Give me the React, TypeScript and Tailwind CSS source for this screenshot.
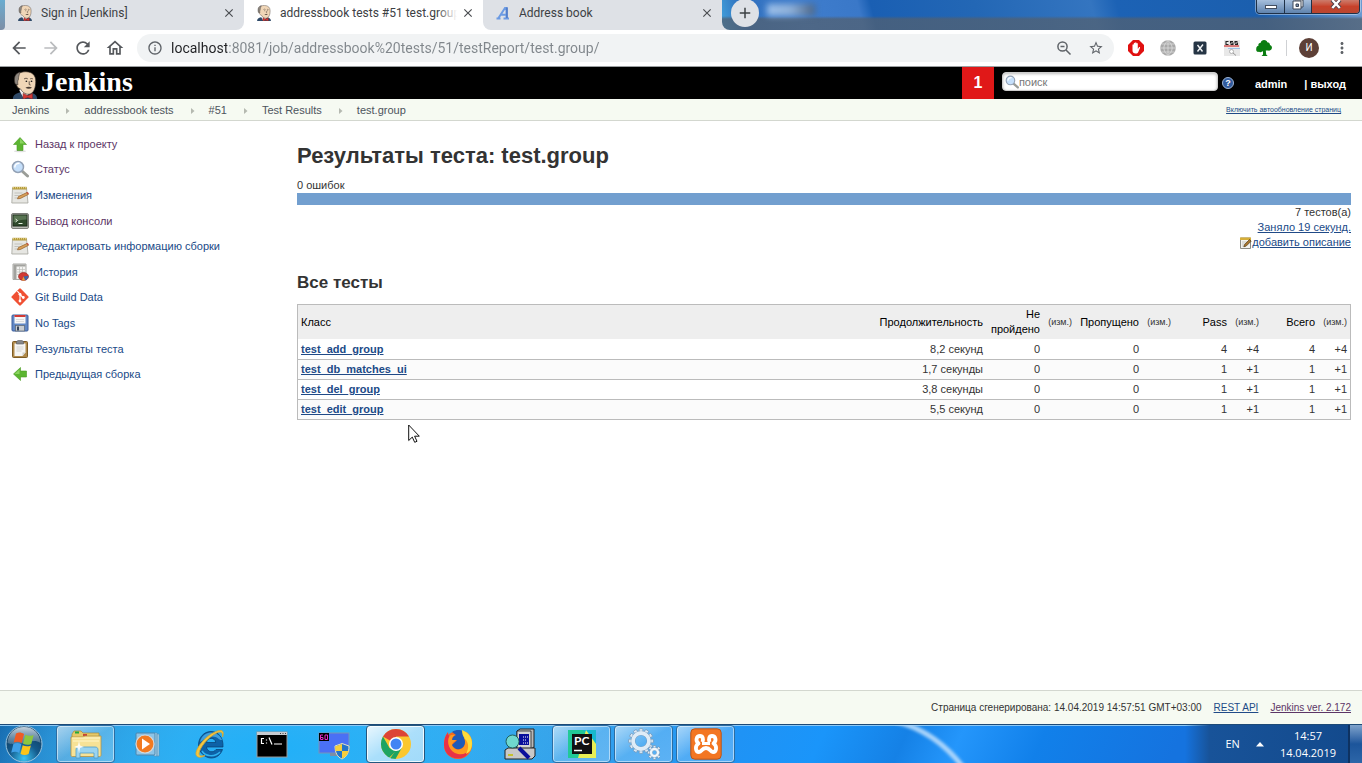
import React from "react";
import { MdArrowBack, MdArrowForward, MdRefresh, MdOutlineHome, MdStarBorder, MdInfoOutline, MdMoreVert, MdClose, MdAdd } from "react-icons/md";

const chromeFont = "font-['Roboto','Noto_Sans',sans-serif]";
const taskbarFont = "font-['Open_Sans','Noto_Sans',sans-serif]";

function Butler({ className }: { className: string }) {
  return (
    <svg viewBox="0 0 26 30" className={className} aria-hidden="true">
      <path d="M0 30c0-4 3-6 7-7h12c4 1 7 3 7 7z" fill="#2f4a68" />
      <path d="M7 21l5 9 7-8-2-4H8z" fill="#f4f4f4" />
      <path d="M3 8C3 3 8 .8 14 .8c7 .2 10.500 4 10.500 10.200 0 6-1.500 11.500-5.500 13.500-4 1.500-8.500-1-10.500-5-3-1-4.500-3-4.500-5-1-2-1-4-1-6.500z" fill="#f0d6b7" stroke="#3a2f28" strokeWidth=".7" />
      <path d="M2.500 14C.5 8 2 2.500 8 1.200c-1.500 3-2 5.500-2 8-1 1.500-1 3-.5 5.500z" fill="#8d8780" stroke="#3a2f28" strokeWidth=".6" />
      <path d="M12 8.500c1.500-1 3-.8 4 0M18.500 8.500c1-.6 2.200-.5 3 0M17.500 11v3.500l1.500.5" fill="none" stroke="#3a2f28" strokeWidth=".8" />
      <circle cx="14.500" cy="11" r=".9" fill="#222" /><circle cx="20" cy="11" r=".9" fill="#222" />
      <path d="M13.500 18c2-1.600 5-1.600 7 0-2 1.200-5 1.200-7 0z" fill="#4a3d35" />
      <path d="M11 24l5 2.500 5-2.500v6l-5-1.500L11 30z" fill="#d33833" stroke="#81201e" strokeWidth=".6" />
    </svg>
  );
}

function Lens({ className }: { className: string }) {
  return (
    <svg viewBox="0 0 18 18" className={className} aria-hidden="true">
      <path d="M11 11l5.500 5" stroke="#9a9d98" strokeWidth="3" strokeLinecap="round" />
      <circle cx="7" cy="7" r="5.500" fill="#c5dffa" stroke="#93a1b5" strokeWidth="1.500" />
      <path d="M3.800 7.500c0-3 2-4.300 4.700-4.200" stroke="#fff" strokeWidth="1.500" fill="none" />
    </svg>
  );
}

function Notepad({ className }: { className: string }) {
  return (
    <svg viewBox="0 0 18 18" className={className} aria-hidden="true">
      <path d="M1.500 2h14L17 17H.8z" fill="#e6e6e2" stroke="#a3a39c" strokeWidth=".8" />
      <path d="M1.500 .8h14.200v2.700H1.500z" fill="#b59b3d" />
      <path d="M2 1.800h13.500" stroke="#f2e6a6" strokeDasharray="1 1" />
      <path d="M3.500 7h8M3.500 9.500h5M3.500 12h4" stroke="#b9b9b4" strokeWidth=".8" />
      <path d="M6.500 12.800l1-2.300 8.500-4 1.500 1.800-8.200 4.200z" fill="#d9a05a" stroke="#8f5a21" strokeWidth=".7" />
      <path d="M15.500 6.500l1.200-.5 1.200 1.500-1 .8z" fill="#c84b42" />
    </svg>
  );
}

function EditNote({ className }: { className: string }) {
  return (
    <svg viewBox="0 0 12 12" className={className} aria-hidden="true">
      <path d="M.5 1h10v10.500H.5z" fill="#f3f3ef" stroke="#8b8b84" />
      <path d="M0 .5h11v2.500H0z" fill="#d6ae38" />
      <path d="M2 5h5M2 7h3M2 9h3" stroke="#bdbdb6" strokeWidth=".8" />
      <path d="M3.800 9.800l.8-2.300L9.500 2.500l1.700 1.600-5 5z" fill="#a8762f" stroke="#523a12" strokeWidth=".7" />
    </svg>
  );
}

function ConsoleIcon({ className }: { className: string }) {
  return (
    <svg viewBox="0 0 18 18" className={className} aria-hidden="true">
      <rect x=".5" y="1.500" width="17" height="15" rx="1.500" fill="#b9bbb5" stroke="#7d7f7a" />
      <rect x="2" y="3" width="14" height="11" fill="#2f4a2c" stroke="#1c2a1a" />
      <path d="M2.500 3.500h13v4c-5 0-9 1-13 3z" fill="#587452" />
      <path d="M4.500 7l2 1.500-2 1.500M7.500 11.500h4" stroke="#e9f5e4" fill="none" />
    </svg>
  );
}

function HistoryIcon({ className }: { className: string }) {
  return (
    <svg viewBox="0 0 18 18" className={className} aria-hidden="true">
      <path d="M2 1h13v15.500H2z" fill="#f4f4f2" stroke="#a9a9a5" />
      <path d="M2.500 1.500h3v14.500h-3zM5 1.500h9.500v2H5z" fill="#a2a29e" />
      <path d="M6 6.500h8M6 9h8M6 11.500h8M8.500 4v11M11.500 4v11" stroke="#bdbdb9" strokeWidth=".7" />
      <ellipse cx="12.500" cy="13.500" rx="5" ry="4" fill="#d13a34" stroke="#8f1d1a" strokeWidth=".6" />
      <path d="M12.500 13.500l4.800-.8c.4 2-1 4-3.300 4.600z" fill="#3f65a8" /><path d="M12.500 13.500l1.500 3.800c-1 .3-2 .2-3 0z" fill="#e5a63c" />
    </svg>
  );
}

function GitIcon({ className }: { className: string }) {
  return (
    <svg viewBox="0 0 18 18" className={className} aria-hidden="true">
      <rect x="2.600" y="2.600" width="12.800" height="12.800" rx="1.200" transform="rotate(45 9 9)" fill="#f05033" />
      <path d="M6.300 3.200L9 6v7M9 6.500L12 9.500" stroke="#fff" strokeWidth="1.100" fill="none" />
      <circle cx="9" cy="6.300" r="1.400" fill="#fff" /><circle cx="9" cy="13" r="1.400" fill="#fff" /><circle cx="12.300" cy="9.500" r="1.400" fill="#fff" />
    </svg>
  );
}

function FloppyIcon({ className }: { className: string }) {
  return (
    <svg viewBox="0 0 18 18" className={className} aria-hidden="true">
      <rect x="1" y="1" width="16" height="16" rx="1" fill="#6288c6" stroke="#3c5f9c" />
      <rect x="3.500" y="1.500" width="11" height="8" fill="#f7f7f7" /><path d="M3.500 1h11v2h-11z" fill="#d23b36" />
      <path d="M5 5.500h8M5 7.500h8" stroke="#d0d0d0" strokeWidth=".7" />
      <rect x="4.500" y="11.500" width="9" height="5.500" fill="#c8ccd2" stroke="#5b6470" strokeWidth=".7" /><rect x="6" y="12.500" width="2" height="4" fill="#37445a" />
    </svg>
  );
}

function ClipboardIcon({ className }: { className: string }) {
  return (
    <svg viewBox="0 0 18 18" className={className} aria-hidden="true">
      <rect x="1.500" y="1.500" width="15" height="16" rx="1" fill="#b08a4b" stroke="#7d5c25" />
      <path d="M3.500 3.500h11v9l-3 3.500h-8z" fill="#f6f6f4" /><path d="M14.500 12.500h-3v3.500z" fill="#cfcfca" />
      <path d="M5.500 7h7M5.500 9h7M5.500 11h5" stroke="#cdcdc8" strokeWidth=".8" />
      <path d="M5.500 1.500l1.500-1h4l1.500 1v2.500h-7z" fill="#85878a" stroke="#5a5c5e" strokeWidth=".6" />
    </svg>
  );
}

function GreenArrow({ left }: { left?: boolean }) {
  return (
    <svg viewBox="0 0 18 18" className="h-4.5 w-4.5 shrink-0" aria-hidden="true">
      <g transform={left ? "rotate(-90 9 9)" : undefined}>
        <path d="M9 2.500l6.500 7h-3.500v6H6v-6H2.500z" fill="#5cb531" stroke="#4a9a24" strokeWidth=".6" />
        <path d="M9 3.500l4.500 5H9z" fill="#8ad45e" />
      </g>
      {!left && <ellipse cx="9" cy="16.200" rx="6" ry="1" fill="#000" opacity=".12" />}
    </svg>
  );
}

const ic = "h-4.5 w-4.5 shrink-0";
const tasks = [
  { label: "Назад к проекту", icon: <GreenArrow />, visited: true },
  { label: "Статус", icon: <Lens className={ic} />, visited: true },
  { label: "Изменения", icon: <Notepad className={ic} /> },
  { label: "Вывод консоли", icon: <ConsoleIcon className={ic} />, visited: true },
  { label: "Редактировать информацию сборки", icon: <Notepad className={ic} /> },
  { label: "История", icon: <HistoryIcon className={ic} /> },
  { label: "Git Build Data", icon: <GitIcon className={ic} /> },
  { label: "No Tags", icon: <FloppyIcon className={ic} /> },
  { label: "Результаты теста", icon: <ClipboardIcon className={ic} /> },
  { label: "Предыдущая сборка", icon: <GreenArrow left /> },
];

const rows = [
  { name: "test_add_group", time: "8,2 секунд", n: "4" },
  { name: "test_db_matches_ui", time: "1,7 секунды", n: "1" },
  { name: "test_del_group", time: "3,8 секунды", n: "1" },
  { name: "test_edit_group", time: "5,5 секунд", n: "1" },
];

function Tab({ title, icon, active, shape }: { title: string; icon: React.ReactNode; active?: boolean; shape: string }) {
  return (
    <div className={`flex w-[239px] shrink-0 items-center pr-2 pb-1 pl-3 ${active ? "bg-white" : "bg-[#dee1e6]"} ${shape}`}>
      <button className="flex min-w-0 flex-1 items-center gap-2 text-left">
        {icon}
        <span className="relative min-w-0 flex-1 overflow-hidden text-xs leading-4 whitespace-nowrap text-[#3c4043]">
          {title}
          {active && <span className="absolute inset-y-0 right-0 w-5 bg-linear-to-r from-white/0 to-white" />}
        </span>
      </button>
      <button aria-label="Закрыть вкладку" className="ml-1 text-[#4a4d51]">
        <MdClose className="h-3.5 w-3.5" />
      </button>
    </div>
  );
}

function TabStrip() {
  return (
    <div className="flex h-[30px] overflow-hidden bg-white">
      <div className="w-[5px] shrink-0 bg-[#dee1e6]"><div className="h-full rounded-br bg-linear-to-b from-[#69acd0] to-[#7c8ea6]" /></div>
      <Tab title="Sign in [Jenkins]" icon={<Butler className="h-4 w-4" />} shape="rounded-br-lg" />
      <Tab title="addressbook tests #51 test.group" active icon={<Butler className="h-4 w-4" />} shape="" />
      <Tab
        title="Address book"
        shape="rounded-bl-lg"
        icon={
          <svg viewBox="0 0 16 16" className="h-4 w-4" aria-hidden="true">
            <path d="M1.500 13.500h4M8.500 13.500h5.500M3.500 13L10 3h1.500v10M6 9.800h5.500" fill="none" stroke="#6c9be3" strokeWidth="2" />
            <path d="M12 2.500v10.500" stroke="#4a76c4" strokeWidth="1.500" />
          </svg>
        }
      />
      <div className="min-w-0 flex-1 bg-[#dee1e6]">
        <div className="flex h-full items-start justify-between rounded-bl-lg bg-[linear-gradient(to_bottom,transparent_16px,rgba(82,96,112,0.75)_19px),linear-gradient(75deg,#43a3dc_0%,#2f6fbd_4%,#3f7dcd_13%,#3a78c8_22%,#1a5fb3_24%,#2367b5_40%,#3475c0_58%,#1c62b5_62%,#1b5fae_84%,#6c9bd2_100%)] pl-[9px]">
          <div className="flex">
            <button aria-label="Новая вкладка" className="mt-[-1px] flex h-7 w-7 items-center justify-center rounded-full bg-[#dee1e6] text-[#3c4043]">
              <MdAdd className="h-4.5 w-4.5" />
            </button>
            <span className="mt-1 ml-2 h-3 w-12 bg-linear-to-r from-[#9cc0ea] via-[#8fb0d8] to-[#4b6484] blur-[3px]" />
          </div>
          <div className="mr-0.5 flex h-[14px] overflow-hidden rounded-b border-x border-b border-[#1f3147] ring-1 ring-white/40">
            <button aria-label="Свернуть" className="flex w-7 items-center justify-center border-r border-[#1f3147] bg-linear-to-b from-[#a6bfdc] to-[#5f83ae]">
              <span className="h-1 w-3 border border-[#444f60] bg-white" />
            </button>
            <button aria-label="Развернуть" className="flex w-[27px] items-start justify-center border-r border-[#1f3147] bg-linear-to-b from-[#a6bfdc] to-[#5f83ae]">
              <svg viewBox="0 0 12 12" className="h-3 w-3" aria-hidden="true"><path d="M3 0h8v7H9" fill="#fff" stroke="#3c4657" /><path d="M1 1h8v8H1z" fill="#fff" stroke="#3c4657" /><path d="M4 4h2.500v2.500H4z" fill="#7890ad" stroke="#3c4657" /></svg>
            </button>
            <button aria-label="Закрыть" className="flex w-[47px] items-start justify-center bg-linear-to-b from-[#cc7b6b] via-[#c7412a] to-[#b94630]">
              <svg viewBox="0 0 12 10" className="h-2.5 w-3" aria-hidden="true"><path d="M2 0l8 8M10 0L2 8" stroke="#4d3f48" strokeWidth="4" /><path d="M2.300 0l7.500 8M9.800 0L2.300 8" stroke="#fff" strokeWidth="2.400" /></svg>
            </button>
          </div>
        </div>
      </div>
    </div>
  );
}

function Toolbar() {
  const nav = "flex h-5 w-5 items-center justify-center text-[#55585c]";
  return (
    <div className="flex h-[37px] items-center border-b border-[#9b9fa1] bg-white pr-[11px] pl-[9px]">
      <div className="mr-3 flex gap-3">
        <button aria-label="Назад" className={nav}><MdArrowBack className="h-5 w-5" /></button>
        <button aria-label="Вперёд" className="flex h-5 w-5 items-center justify-center text-[#babcbe]"><MdArrowForward className="h-5 w-5" /></button>
        <button aria-label="Обновить" className={nav}><MdRefresh className="h-5 w-5" /></button>
        <button aria-label="Домашняя страница" className={nav}><MdOutlineHome className="h-5 w-5" /></button>
      </div>
      <div className="flex h-7 min-w-0 flex-1 items-center rounded-full bg-[#f1f3f4] px-2.5 text-[#5f6368]">
        <MdInfoOutline className="h-4 w-4 shrink-0" />
        <input
          aria-label="Адресная строка"
          defaultValue="localhost:8081/job/addressbook%20tests/51/testReport/test.group/"
          className="ml-2 min-w-0 flex-1 bg-[linear-gradient(to_right,#202124_56px,#80868b_56px)] bg-clip-text text-sm text-transparent outline-none"
        />
        <button aria-label="Масштаб" className="mr-4">
          <svg viewBox="0 0 16 16" className="h-4 w-4" fill="none" stroke="currentColor" strokeWidth="1.500" aria-hidden="true"><circle cx="6.500" cy="6.500" r="4.600" /><path d="M10 10l4.500 4.500M4.500 6.500h4" /></svg>
        </button>
        <button aria-label="Добавить в закладки"><MdStarBorder className="h-4 w-4" /></button>
      </div>
      <div className="ml-3.5 flex gap-4">
        <button aria-label="Блокировщик" className="h-4 w-4">
          <svg viewBox="0 0 16 16" aria-hidden="true"><path d="M5 0h6l5 5v6l-5 5H5l-5-5V5z" fill="#e01010" /><path d="M4.500 8.500V5c0-1 1.300-1 1.300 0V3.500c0-1 1.300-1 1.300 0V3c0-1 1.400-1 1.400 0v.7c0-1 1.300-1 1.300.2V9l1-1.500c.6-.8 1.500-.3 1.200.5l-1.700 4c-.5 1-1.300 1.500-2.600 1.500-2 0-3.200-1-3.200-3z" fill="#fff" /></svg>
        </button>
        <button aria-label="Перевод" className="h-4 w-4">
          <svg viewBox="0 0 16 16" aria-hidden="true"><circle cx="8" cy="8" r="7.800" fill="#a9a9a9" /><path d="M8 0v16M0 8h16M1.500 4h13M1.500 12h13M8 .5C2.500 5 2.500 11 8 15.500M8 .5C13.500 5 13.500 11 8 15.500" stroke="#dcdcdc" strokeWidth=".8" fill="none" /></svg>
        </button>
        <button aria-label="XPath" className="h-4 w-4">
          <svg viewBox="0 0 16 16" aria-hidden="true"><rect x="1.500" y="1.500" width="13" height="13" rx="1.500" fill="#263545" /><path d="M5.500 5l5 6.500M11 4.500L5.500 11.500" stroke="#f3f5f7" strokeWidth="1.400" /></svg>
        </button>
        <button aria-label="CSS" className="h-4 w-4">
          <svg viewBox="0 0 16 16" aria-hidden="true"><path d="M0 0h16v16H0z" fill="#e8e8e8" /><path d="M4.500 1.500H2v3h2.500M9 1.500H6.500V3H9v1.500H6.500M13.500 1.500H11V3h2.500v1.500H11" stroke="#222" strokeWidth="1.100" fill="none" /><path d="M0 6h15" stroke="#d34b4b" strokeWidth="1.400" /><path d="M4 8.500h12" stroke="#9ec2e8" /><circle cx="7.500" cy="11.500" r="2" fill="#fff" stroke="#999" strokeWidth=".7" /><path d="M9 13l3 2.500" stroke="#999" /></svg>
        </button>
        <button aria-label="Дерево" className="h-4 w-4">
          <svg viewBox="0 0 16 16" aria-hidden="true"><path d="M8 0c2 0 3 1 3.200 2.200C13 2.300 14 3.500 14 5c1.500.5 2.300 2 1.800 3.500-.5 1.700-2.300 2.500-4 2L9.800 10.500l.4 4 1.500 1.500H5.500L7 14.500V11c-1 1.200-3 1.500-4 .8C1 12.500-.3 10.500.3 9c-.3-1.800.7-3 2.200-3.300C2 4 3 2.800 4.700 2.700 5 1 6.500 0 8 0z" fill="#0a7d10" /></svg>
        </button>
      </div>
      <span className="mr-3 ml-3.5 h-4 w-px bg-[#cfd1d4]" />
      <button className="flex h-5 w-5 items-center justify-center rounded-full bg-[#5d4037] text-[10px] leading-3 text-white">И</button>
      <button aria-label="Меню" className="ml-3.5 text-[#5f6368]"><MdMoreVert className="h-4.5 w-4.5" /></button>
    </div>
  );
}

function JenkinsHeader() {
  const crumbs = ["Jenkins", "addressbook tests", "#51", "Test Results", "test.group"];
  return (
    <header>
      <div className="flex h-8 items-stretch bg-black pr-4 pl-[11px]">
        <a href="#" className="flex items-start gap-0.5 text-white">
          <Butler className="mt-1 h-7 w-7" />
          <span className="font-['Liberation_Serif',serif] text-[28px] leading-[30px] font-bold">Jenkins</span>
        </a>
        <div className="flex-1" />
        <a href="#" className="flex w-8 items-center justify-center bg-[#e01818] text-base font-bold text-white">1</a>
        <label className="mt-[5px] ml-2 flex h-[19px] w-[216px] items-center rounded-sm border border-[#ccc] bg-white pl-0.5 shadow-[inset_0_1px_3px_#bbb]">
          <Lens className="h-3.5 w-3.5 shrink-0" />
          <input type="search" aria-label="поиск" placeholder="поиск" className="min-w-0 flex-1 bg-transparent text-[11px] leading-4 outline-none placeholder:text-[#777]" />
        </label>
        <a href="#" aria-label="Справка" className="ml-1 flex items-center">
          <span className="flex h-3 w-3 items-center justify-center rounded-full border border-[#9db4d4] bg-[#315a9c] text-[9px] leading-3 font-bold text-white">?</span>
        </a>
        <a href="#" className="mt-[10px] ml-[21px] leading-[15px] font-bold text-white">admin</a>
        <span className="mt-[10px] ml-[17px] leading-[15px] font-bold text-white">| <a href="#">выход</a></span>
      </div>
      <nav className="flex h-[22px] items-center border-b border-[#d3d7cf] bg-[#f6faf2] px-3 pt-0.5 text-[#4d545d]">
        {crumbs.map((c, i) => (
          <React.Fragment key={c}>
            {i > 0 && (
              <svg viewBox="0 0 4 6" className="mr-3.5 ml-[17px] h-1.5 w-1" aria-hidden="true"><path d="M0 0l3.500 3L0 6z" fill="#b5b9b0" /></svg>
            )}
            <a href="#">{c}</a>
          </React.Fragment>
        ))}
        <a href="#" className="mr-[9px] ml-auto text-[7px] text-[#204a87] underline">Включить автообновление страниц</a>
      </nav>
    </header>
  );
}

function ResultsTable() {
  const th = "px-[3px] text-right font-normal text-black";
  const thDiff = "px-[3px] text-right text-[9px] font-normal text-[#333]";
  const td = "border-t border-[#bbb] px-[3px] text-right";
  return (
    <table className="w-full table-fixed border-separate border-spacing-0 border border-[#bbb] leading-[15px]">
      <colgroup>
        <col /><col className="w-[120px]" />
        <col className="w-[57px]" /><col className="w-8" />
        <col className="w-[67px]" /><col className="w-8" />
        <col className="w-14" /><col className="w-8" />
        <col className="w-14" /><col className="w-8" />
      </colgroup>
      <thead className="bg-[#eee]">
        <tr className="h-[34px]">
          <th className="px-[3px] text-left font-normal text-black">Класс</th>
          <th className={th}>Продолжительность</th>
          <th className={th}>Не пройдено</th><th className={thDiff}>(изм.)</th>
          <th className={th}>Пропущено</th><th className={thDiff}>(изм.)</th>
          <th className={th}>Pass</th><th className={thDiff}>(изм.)</th>
          <th className={th}>Всего</th><th className={thDiff}>(изм.)</th>
        </tr>
      </thead>
      <tbody className="[&>tr:first-child>td]:border-white">
        {rows.map((r) => (
          <tr key={r.name} className="h-5 even:bg-[#fbfbfb]">
            <td className="border-t border-[#bbb] px-[3px] font-bold"><a href="#" className="text-[#204a87] underline">{r.name}</a></td>
            <td className={td}>{r.time}</td>
            <td className={td}>0</td><td className={td} />
            <td className={td}>0</td><td className={td} />
            <td className={td}>{r.n}</td><td className={td}>+{r.n}</td>
            <td className={td}>{r.n}</td><td className={td}>+{r.n}</td>
          </tr>
        ))}
      </tbody>
    </table>
  );
}

function WinButton({ label, look, children }: { label: string; look: "open" | "active" | "pinned"; children: React.ReactNode }) {
  const skin = {
    pinned: "border-transparent",
    open: "border-[#2b6da3] bg-linear-to-br from-white/60 via-white/20 to-white/25 shadow-[inset_0_0_0_1px_rgba(255,255,255,0.5)]",
    active: "border-[#24577f] bg-linear-to-br from-white/90 via-white/60 to-white/55 shadow-[inset_0_0_0_1px_rgba(255,255,255,0.8)]",
  }[look];
  return (
    <button aria-label={label} className={`flex h-full w-[59px] items-center justify-center rounded-sm border ${skin}`}>
      <svg viewBox="0 0 32 32" className="h-8 w-8" aria-hidden="true">{children}</svg>
    </button>
  );
}

const gearTeeth = Array.from({ length: 12 }, (_, i) => i * 30);
const smallTeeth = Array.from({ length: 8 }, (_, i) => i * 45);

function Taskbar() {
  return (
    <div className={`flex h-[39px] items-stretch border-t border-[#1d4a77] bg-[radial-gradient(ellipse_300px_90px_at_20%_60%,#21b0f8,transparent),linear-gradient(115deg,#1668ac_0%,#2b86c8_4%,#45aeea_14%,#3fb2f2_26%,#38a4ea_40%,#1f93f5_54%,#1a95fa_60%,#1581e6_66%,#2496fb_70%,#1180ea_76%,#1573df_86%,#1573df_90%)] text-white shadow-[inset_0_1px_0_#8cc8f5] ${taskbarFont}`}>
      <button aria-label="Пуск" className="mr-[13px] ml-[5px] flex items-center">
        <svg viewBox="0 0 38 38" className="h-[38px] w-[38px]" aria-hidden="true">
          <defs>
            <radialGradient id="orb" cx=".5" cy=".9" r=".9"><stop offset="0" stopColor="#3bc4f4" /><stop offset=".45" stopColor="#145a8c" /><stop offset="1" stopColor="#0c3354" /></radialGradient>
            <linearGradient id="orbShine" x2="0" y2="1"><stop offset="0" stopColor="#e6eff6" stopOpacity=".85" /><stop offset="1" stopColor="#9fb6c8" stopOpacity=".35" /></linearGradient>
          </defs>
          <circle cx="19" cy="19" r="18" fill="url(#orb)" stroke="#9bc4df" strokeWidth="1" />
          <path d="M2.500 18C3 8 10 2 19 2s16 6 16.500 16c-6-4-10-1-16.500 0S8 20 2.500 18z" fill="url(#orbShine)" />
          <path d="M11 8.500c3-1.500 5.200-1.200 8 .5l-2.300 9c-2.600-1.600-5.200-1.800-8-.4z" fill="#ef5b25" />
          <path d="M20.300 9.700c2.900 1.500 5.400 1.500 8.300.2l-2.300 9c-2.900 1.300-5.400 1.200-8.300-.2z" fill="#8cc63f" />
          <path d="M8.400 19c2.900-1.400 5.500-1.200 8 .3l-2.200 8.700c-2.600-1.500-5.100-1.600-8-.3z" fill="#3fa0e8" />
          <path d="M17.700 20.200c2.700 1.400 5.300 1.500 8.200.2l-2.300 8.700c-2.900 1.400-5.400 1.200-8.100-.2z" fill="#fcc419" />
        </svg>
      </button>
      <div className="flex gap-[3px]">
        <WinButton label="Проводник" look="open">
          <path d="M2 6l2-3h7l2 2h16v6H2z" fill="#e6c968" stroke="#a8863a" strokeWidth=".7" />
          <path d="M5 3.500h4v2H5z" fill="#23a83b" /><path d="M13 6h4v2h-4z" fill="#c84438" /><path d="M21 8h4v2h-4z" fill="#3f8ed3" />
          <path d="M1 9h12l2-1h16v19c0 1-.5 1.500-1.500 1.500h-27C1.500 28.500 1 28 1 27z" fill="#f7e296" stroke="#b69443" strokeWidth=".8" />
          <path d="M2 10h28M3 13h26" stroke="#fff6c9" />
          <path d="M6 30V22c0-2 1-3 3-3h16c2 0 3 1 3 3v8h-4v-5H10v5z" fill="#9ad4f0" stroke="#4b9cc9" strokeWidth=".8" />
          <path d="M9 13l1 4.500 4 1.500-4 1-1 5-1-5-4-1 4-1.500z" fill="#fff" opacity=".9" />
        </WinButton>
        <WinButton label="Проигрыватель" look="pinned">
          <path d="M22 5h3v23h-3zM25 6h2v22h-2z" fill="#b3dcf3" stroke="#5992b8" strokeWidth=".7" />
          <rect x="4" y="5" width="19" height="22" rx="1" fill="#8cc5e8" stroke="#4c86ad" />
          <circle cx="13" cy="16" r="9" fill="#f27a21" stroke="#d5d9dc" strokeWidth="1.200" /><path d="M10 10.500l8 5.500-8 5.500z" fill="#fff" />
        </WinButton>
        <WinButton label="Internet Explorer" look="pinned">
          <path fillRule="evenodd" d="M4.500 17C4.500 9.500 10 3.500 17 3.500S29.500 9 29 19H12.500c.5 5.500 7.500 6 9.500 2.500h6.500C26.500 27 22.500 30 17 30S4.500 24.500 4.500 17zM12.500 14.500h9.200c-.3-5.500-8.700-5.500-9.200 0z" fill="#0d62a8" stroke="#083c6e" strokeWidth=".7" />
          <path d="M6 14C7.500 8 12 4.500 17 4.500S27 8 28 12c-3 .5-4-3.500-10-3.500S9 13 6 14z" fill="#3f9edb" />
          <path d="M8 23c3 5 12 7 18 1" stroke="#2fb2ef" strokeWidth="1.500" fill="none" />
          <path d="M28.500 9C31 2 27 1.500 22 3.500 11 8 1 21 2 26.500c1 4 6 3 9 1-4 1-6 .5-6-2C5.500 20 14 9 23 4.800c4-1.800 6-.3 5.500 4.200z" fill="#f4c842" stroke="#d9a52c" strokeWidth=".8" />
        </WinButton>
        <WinButton label="Командная строка" look="pinned">
          <rect x="1" y="4" width="30" height="25" fill="#000" stroke="#999" /><path d="M1 4h30v3H1z" fill="#c7cbd0" /><path d="M24 5.500h1M26.500 5.500h1M29 5.500h1" stroke="#444" />
          <path d="M8 10.500H5.500v5H8M10.500 11.500v1M10.500 14.500v1M13 9.500l3 7M18 16h8" stroke="#fff" strokeWidth="1.200" fill="none" />
        </WinButton>
        <WinButton label="Монитор" look="pinned">
          <rect x="1" y="5" width="30" height="20" fill="#4a70f5" stroke="#7894b8" /><path d="M12 25h8v3h-8z" fill="#7b8ea6" />
          <path d="M1 5h10v8H1z" fill="#000" /><path d="M5 7H2.500v4.500H5V9.500H2.500M7 7h2.500v4.500H7z" stroke="#e22ec4" strokeWidth="1" fill="none" />
          <path d="M17 18l7-2.500 7 2.500c0 7-2.500 11-7 13-4.500-2-7-6-7-13z" fill="#2474c9" stroke="#e8e2c0" strokeWidth="1" /><path d="M24 16v7h-6.500c-.3-1.500-.4-3-.4-4.500zM24 23h6.500c-1 4-3.500 6.500-6.500 7.500z" fill="#f6cf3d" />
        </WinButton>
        <WinButton label="Google Chrome" look="active">
          <circle cx="16" cy="16" r="15" fill="#fbc72e" />
          <path d="M16 16L3 8.500A15 15 0 0 1 29 8.500H16z" fill="#dc4437" />
          <path d="M3 8.500L9.500 20l6.500 3-6.700 6.500L15 31A15 15 0 0 1 3 8.500z" fill="#1da462" />
          <path d="M22 19.500L15.500 31l-5-1L16 22z" fill="#1da462" />
          <circle cx="16" cy="16" r="7" fill="#fff" /><circle cx="16" cy="16" r="5.500" fill="#4285f4" />
        </WinButton>
        <WinButton label="Firefox" look="pinned">
          <circle cx="16" cy="17" r="14" fill="#f5681d" />
          <path d="M2 17C2 10 4 7 6 4c0 2 .5 3 1.500 4C9 7 11 6.500 13 7c-2 1-3 3-3 4.500h4c0 2-3 2.500-4 5 1 5 7 7 11 3 3-3 2-8-1-10 3 0 5 2 6 4 0-4-2-7-6-9C23 1.500 29 6 30 13c1.500 8-4 17.500-14 17.500C8 30.500 2 25 2 17z" fill="#ff9a1f" />
          <path d="M10 4c6-4 14-2 16 6l-4 0c2 4 1 8-2 10-4 2.500-8 1-10-3 2-2.500 4-3 5-5h-5c.500-3 2-4 4-5z" fill="#1f5bb8" />
          <path d="M2 17C2 10 4 7 6 4c0 2 .5 3 1.500 4C4 14 7 24 16 26c5 1 9-1 12-4-2 5-6 8.500-12 8.500C8 30.500 2 25 2 17z" fill="#e83247" />
          <path d="M20 2c7 3 10 8 10 13 0 6-3 10-6 11 3-6 3-11-1-15-2-3-3-5-3-9z" fill="#ffdc3a" />
        </WinButton>
        <WinButton label="Поиск компьютеров" look="pinned">
          <path d="M13 3l3-2h14v18l-3 2H13z" fill="#b8b8b8" stroke="#222" /><path d="M13 3h14v18H13z" fill="#d4d4d4" stroke="#222" strokeWidth=".8" /><path d="M15 6h10v11H15z" fill="#0a0f9c" /><path d="M19 9h5M19 12h4M19 15h5" stroke="#fff" strokeDasharray="1 1" />
          <path d="M1 22l3-2h27v8l-3 3H1z" fill="#c8c8c8" stroke="#222" /><path d="M4 27h5" stroke="#c5c12d" strokeWidth="2" />
          <circle cx="8.500" cy="13.500" r="6.500" fill="#6fd8cf" stroke="#21605e" /><path d="M15 20l10 10" stroke="#0a0f9c" strokeWidth="4" />
        </WinButton>
        <WinButton label="PyCharm" look="open">
          <path d="M2 2h28v28H2z" fill="#21c997" /><path d="M17 2h13v14z" fill="#10b8d6" /><path d="M20 2l10 14v14H12z" fill="#e9ee55" /><path d="M24 2h6v10z" fill="#18b7cd" />
          <rect x="6" y="6" width="20" height="20" fill="#111" /><text x="8" y="16.500" fontSize="12" fontWeight="bold" fontFamily="Lato, sans-serif" fill="#fff">PC</text><path d="M8 22.500h8" stroke="#fff" strokeWidth="1.500" />
        </WinButton>
        <WinButton label="Службы" look="open">
          <g fill="#dbe9f5" stroke="#6f93b5" strokeWidth=".7">
            {gearTeeth.map((a) => <rect key={a} x="11.200" y=".6" width="3.600" height="4" rx=".6" transform={`rotate(${a} 13 13)`} />)}
            {smallTeeth.map((a) => <rect key={a} x="25.100" y="17.500" width="2.800" height="3" rx=".5" transform={`rotate(${a} 26.500 24.500)`} />)}
          </g>
          <circle cx="13" cy="13" r="8" fill="none" stroke="#6f93b5" strokeWidth="4.600" /><circle cx="13" cy="13" r="8" fill="none" stroke="#dfecf7" strokeWidth="3.800" />
          <circle cx="26.500" cy="24.500" r="3.500" fill="none" stroke="#6f93b5" strokeWidth="3.200" /><circle cx="26.500" cy="24.500" r="3.500" fill="none" stroke="#eef6fc" strokeWidth="2.400" />
        </WinButton>
        <WinButton label="XAMPP" look="open">
          <rect x=".8" y=".8" width="30.400" height="30.400" rx="4" fill="#f37623" stroke="#b9551a" />
          <path d="M12.500 14c1-3 .5-6-2.500-6-3.500 0-5 4.500-1.500 7.500C4.500 18 5.500 24 9 24c3 0 2.500-4 7-4s4 4 7 4c3.500 0 4.500-6 .5-8.500 3.500-3 2-7.500-1.500-7.500-3 0-3.500 3-2.500 6" fill="none" stroke="#fff" strokeWidth="3.800" strokeLinejoin="round" />
          <path d="M12 15.500h8" stroke="#fff" strokeWidth="3" />
        </WinButton>
      </div>
      <div className="flex min-w-0 flex-1 overflow-hidden">
        <svg viewBox="0 0 90 38" className="ml-40 h-[38px] w-[90px]" aria-hidden="true">
          <defs><filter id="soft"><feGaussianBlur stdDeviation="1.500" /></filter></defs>
          <path d="M0 -4Q40 6 68 42" stroke="#a9d4fb" strokeWidth="5" fill="none" filter="url(#soft)" />
        </svg>
      </div>
      <div className="flex items-center bg-linear-to-r from-[#1a62b4]/0 via-[#185399] via-15% to-[#134a8d] pr-3 pl-10 text-[11px]">
        <span className="mr-4 leading-4">EN</span>
        <button aria-label="Показать скрытые значки" className="mr-4">
          <svg viewBox="0 0 8 5" className="h-[5px] w-2" aria-hidden="true"><path d="M4 0l4 4.500H0z" fill="#fff" /></svg>
        </button>
        <span className="text-center leading-[17px]">14:57<br />14.04.2019</span>
      </div>
      <button aria-label="Свернуть все окна" className="w-3.5 border-l-2 border-[#0e3261] bg-linear-to-b from-[#7fa3cb] via-[#1c559b] to-[#2d66a8]" />
    </div>
  );
}

export default function App() {
  return (
    <div className="relative flex min-h-screen flex-col overflow-hidden bg-white font-['Liberation_Sans',Arial,sans-serif] text-[11px] text-[#333]">
      <div className={chromeFont}>
        <TabStrip />
        <Toolbar />
      </div>
      <JenkinsHeader />
      <div className="flex flex-1">
        <aside className="w-[297px] shrink-0 pt-2.5 pl-[11px]">
          <ul className="grid h-64 auto-rows-fr">
            {tasks.map((t) => (
              <li key={t.label} className="flex items-center">
                <a href="#" className={`flex items-center gap-1.5 leading-4 ${t.visited ? "text-[#5c3566]" : "text-[#204a87]"}`}>
                  {t.icon}
                  {t.label}
                </a>
              </li>
            ))}
          </ul>
        </aside>
        <main className="min-w-0 flex-1 pt-[21px] pr-[11px]">
          <h1 className="mb-2 text-[22px] leading-7 font-bold">Результаты теста: test.group</h1>
          <div className="leading-[15px]">
            <div>0 ошибок</div>
            <div className="h-3 bg-[#729fcf]" />
            <div className="text-right">7 тестов(а)</div>
            <div className="text-right"><a href="#" className="text-[#204a87] underline">Заняло 19 секунд.</a></div>
            <div className="flex items-center justify-end">
              <EditNote className="h-3 w-3" />
              <a href="#" className="text-[#204a87] underline">добавить описание</a>
            </div>
          </div>
          <h2 className="mt-[23px] mb-[11px] text-[17px] leading-5 font-bold">Все тесты</h2>
          <ResultsTable />
        </main>
      </div>
      <footer className="flex h-[34px] items-center justify-end gap-3 border-t border-[#d3d7cf] bg-[#f6faf2] pr-[11px] text-[10px]">
        <span>Страница сгенерирована: 14.04.2019 14:57:51 GMT+03:00</span>
        <a href="#" className="text-[#204a87] underline">REST API</a>
        <a href="#" className="text-[#5c3566] underline">Jenkins ver. 2.172</a>
      </footer>
      <Taskbar />
      <svg viewBox="0 0 12 19" className="absolute top-[424px] left-[408px] h-[19px] w-3" aria-hidden="true">
        <path d="M.7 1v15.500l3.600-3.400 2.400 5.200 2.300-1-2.400-5.100h4.700z" fill="#fff" stroke="#111" strokeWidth="1" />
      </svg>
    </div>
  );
}
